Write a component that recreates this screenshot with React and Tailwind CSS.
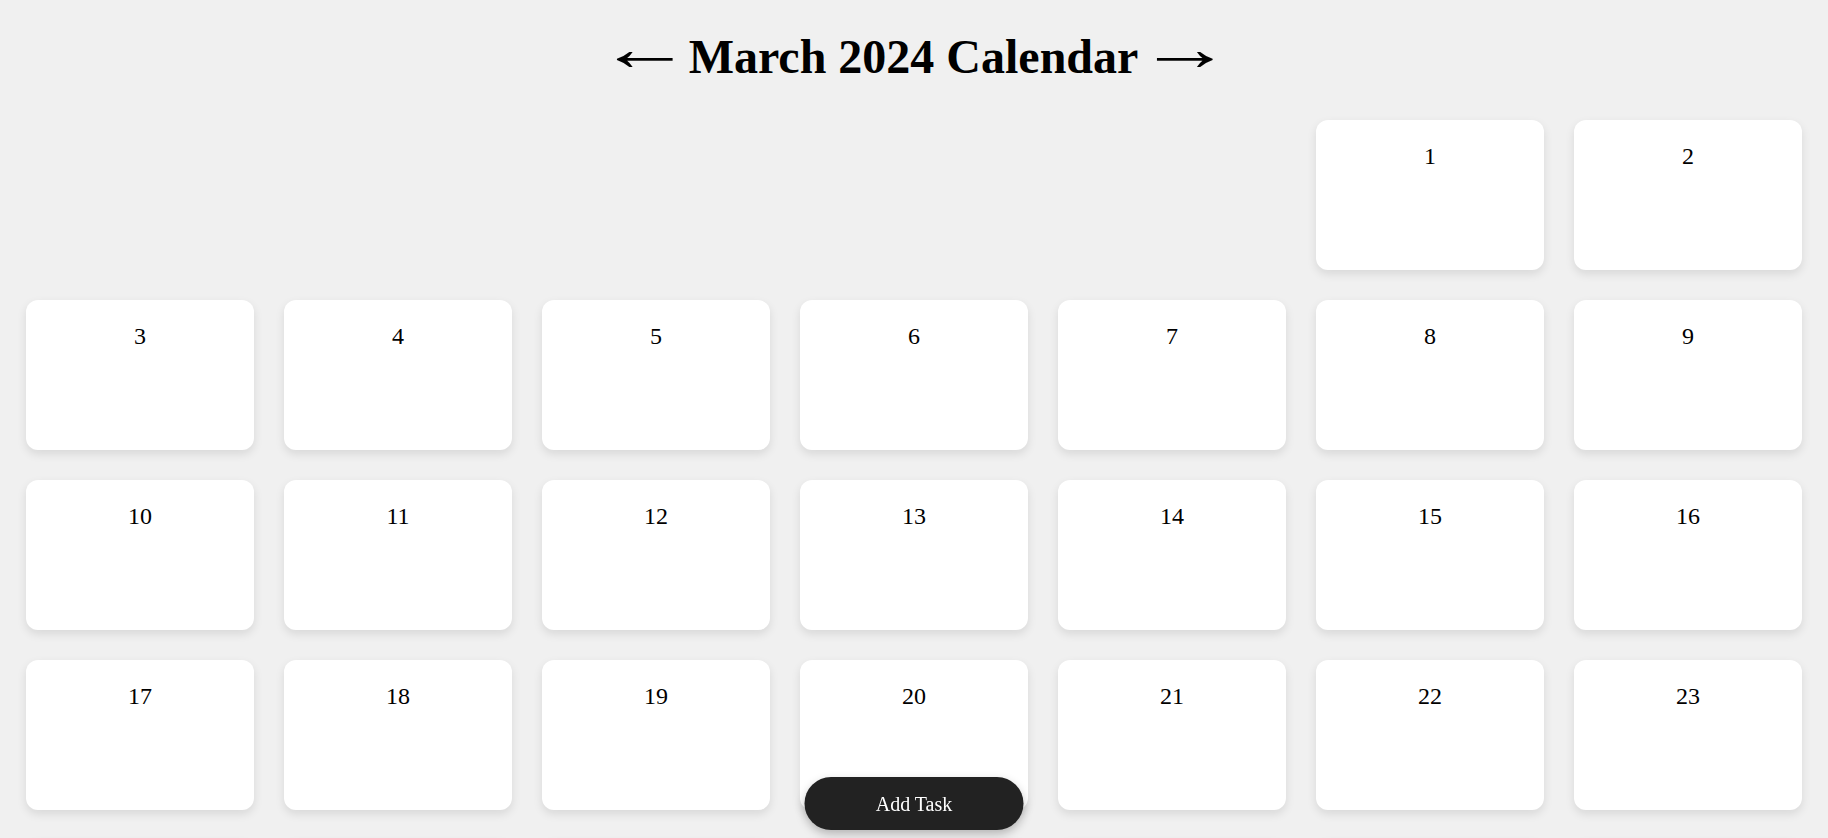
import { useState } from 'react'

const DAYS_IN_MONTH = 31
const FIRST_WEEKDAY = 5 // March 1st, 2024 sits in the 6th column

export default function App() {
  const [tasks] = useState({})

  const cells = [
    ...Array.from({ length: FIRST_WEEKDAY }, () => null),
    ...Array.from({ length: DAYS_IN_MONTH }, (_, i) => i + 1),
  ]

  return (
    <div className="min-h-screen bg-[#f0f0f0] px-[26px] pt-[30px] pb-[120px] text-black font-['Liberation_Serif','Times_New_Roman',serif]">
      {/* Header */}
      <h1 className="flex justify-center items-center h-[53px] mb-[37px] text-[48px] font-bold leading-[53px] whitespace-nowrap">
        <span className="block w-[56px] mr-[17px] text-center text-[64px] leading-none font-normal scale-x-[1.47] -translate-x-[5px] -translate-y-[8px]">←</span>
        <span>March 2024 Calendar</span>
        <span className="block w-[56px] ml-[18px] text-center text-[64px] leading-none font-normal scale-x-[1.47] -translate-x-[5px] -translate-y-[8px]">→</span>
      </h1>

      {/* Grid */}
      <div className="grid grid-cols-7 gap-[30px]">
        {cells.map((day, i) =>
          day === null ? (
            <div key={`empty-${i}`} className="h-[150px]" />
          ) : (
            <div
              key={day}
              className="h-[150px] bg-white rounded-[12px] shadow-[0_4px_10px_rgba(0,0,0,0.1)] pt-[23px] text-center"
            >
              <div className="text-[24px] leading-[27px]">{day}</div>
              {(tasks[day] || []).map((t) => (
                <div key={t} className="text-sm">{t}</div>
              ))}
            </div>
          )
        )}
      </div>

      {/* Add task */}
      <button className="fixed bottom-[8px] left-1/2 -translate-x-1/2 w-[219px] h-[53px] rounded-full bg-[#222222] text-white text-[20px] shadow-[0_4px_10px_rgba(0,0,0,0.25)]">
        Add Task
      </button>
    </div>
  )
}
